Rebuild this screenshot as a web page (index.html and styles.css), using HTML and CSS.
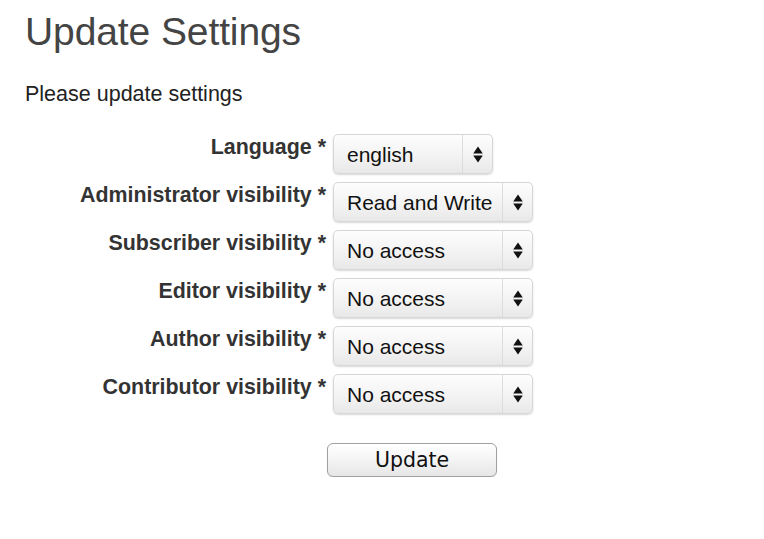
FILE: index.html
```html
<!DOCTYPE html>
<html lang="en">
<head>
<meta charset="utf-8">
<title>Update Settings</title>
<link rel="stylesheet" href="styles.css">
</head>
<body>
<main class="page">
  <h1 class="title">Update Settings</h1>
  <p class="intro">Please update settings</p>
  <form class="form">
    <div class="row">
      <label class="label" for="lang">Language *</label>
      <div class="select select-narrow">
        <select id="lang"><option>english</option></select>
        <span class="arrows"><svg width="10" height="17" viewBox="0 0 10 17"><path d="M5 0.5 L9.8 7.5 H0.2 Z M5 16.5 L9.8 9.5 H0.2 Z" fill="#111"/></svg></span>
      </div>
    </div>
    <div class="row">
      <label class="label" for="admin">Administrator visibility *</label>
      <div class="select">
        <select id="admin"><option>Read and Write</option></select>
        <span class="arrows"><svg width="10" height="17" viewBox="0 0 10 17"><path d="M5 0.5 L9.8 7.5 H0.2 Z M5 16.5 L9.8 9.5 H0.2 Z" fill="#111"/></svg></span>
      </div>
    </div>
    <div class="row">
      <label class="label" for="sub">Subscriber visibility *</label>
      <div class="select">
        <select id="sub"><option>No access</option></select>
        <span class="arrows"><svg width="10" height="17" viewBox="0 0 10 17"><path d="M5 0.5 L9.8 7.5 H0.2 Z M5 16.5 L9.8 9.5 H0.2 Z" fill="#111"/></svg></span>
      </div>
    </div>
    <div class="row">
      <label class="label" for="ed">Editor visibility *</label>
      <div class="select">
        <select id="ed"><option>No access</option></select>
        <span class="arrows"><svg width="10" height="17" viewBox="0 0 10 17"><path d="M5 0.5 L9.8 7.5 H0.2 Z M5 16.5 L9.8 9.5 H0.2 Z" fill="#111"/></svg></span>
      </div>
    </div>
    <div class="row">
      <label class="label" for="au">Author visibility *</label>
      <div class="select">
        <select id="au"><option>No access</option></select>
        <span class="arrows"><svg width="10" height="17" viewBox="0 0 10 17"><path d="M5 0.5 L9.8 7.5 H0.2 Z M5 16.5 L9.8 9.5 H0.2 Z" fill="#111"/></svg></span>
      </div>
    </div>
    <div class="row">
      <label class="label" for="co">Contributor visibility *</label>
      <div class="select">
        <select id="co"><option>No access</option></select>
        <span class="arrows"><svg width="10" height="17" viewBox="0 0 10 17"><path d="M5 0.5 L9.8 7.5 H0.2 Z M5 16.5 L9.8 9.5 H0.2 Z" fill="#111"/></svg></span>
      </div>
    </div>
    <div class="row row-submit">
      <span></span>
      <button type="button" class="button">Update</button>
    </div>
  </form>
</main>
</body>
</html>
```
FILE: styles.css
```css
html, body {
  margin: 0;
  padding: 0;
  background: #fff;
}

body {
  font-family: "Liberation Sans", Arial, Helvetica, sans-serif;
  color: #222;
}

.page {
  padding: 10px 0 0 25px;
}

.title {
  margin: 0;
  font-size: 39px;
  font-weight: normal;
  line-height: 44px;
  color: #444;
  letter-spacing: -0.1px;
}

.intro {
  margin: 28px 0 0 0;
  font-size: 21.5px;
  line-height: 24px;
  color: #222;
}

.form {
  margin-top: 28px;
  display: flex;
  flex-direction: column;
  gap: 8px;
}

.row {
  display: grid;
  grid-template-columns: 301px auto;
  column-gap: 7px;
  align-items: start;
}

.label {
  text-align: right;
  font-weight: bold;
  font-size: 21.4px;
  line-height: 24px;
  padding-top: 1px;
  color: #333;
  white-space: nowrap;
}

.select {
  position: relative;
  width: 200px;
  height: 40px;
}

.select-narrow {
  width: 160px;
}

.select select {
  appearance: none;
  -webkit-appearance: none;
  width: 100%;
  height: 40px;
  margin: 0;
  padding: 0 30px 0 13px;
  border: 1px solid #d6d6d6;
  border-radius: 5px;
  background: linear-gradient(#fdfdfd, #f1f1f1 65%, #e8e8e8);
  box-shadow: 0 1px 2px rgba(0, 0, 0, 0.15);
  font-family: "Liberation Sans", Arial, Helvetica, sans-serif;
  font-size: 21px;
  color: #111;
  outline: none;
}

.arrows {
  position: absolute;
  top: 1px;
  right: 1px;
  bottom: 1px;
  width: 29px;
  border-left: 1px solid #dcdcdc;
  display: flex;
  align-items: center;
  justify-content: center;
  pointer-events: none;
}

.row-submit {
  margin-top: 21px;
  column-gap: 1px;
}

.button {
  width: 170px;
  height: 34px;
  margin: 0;
  padding: 0;
  border: 1px solid #a0a0a0;
  border-radius: 6px;
  background: linear-gradient(#ffffff, #f4f4f4 50%, #e6e6e6);
  box-shadow: 0 1px 1px rgba(0, 0, 0, 0.1);
  font-family: "DejaVu Sans", "Lucida Grande", sans-serif;
  font-size: 20.5px;
  color: #111;
}
```
